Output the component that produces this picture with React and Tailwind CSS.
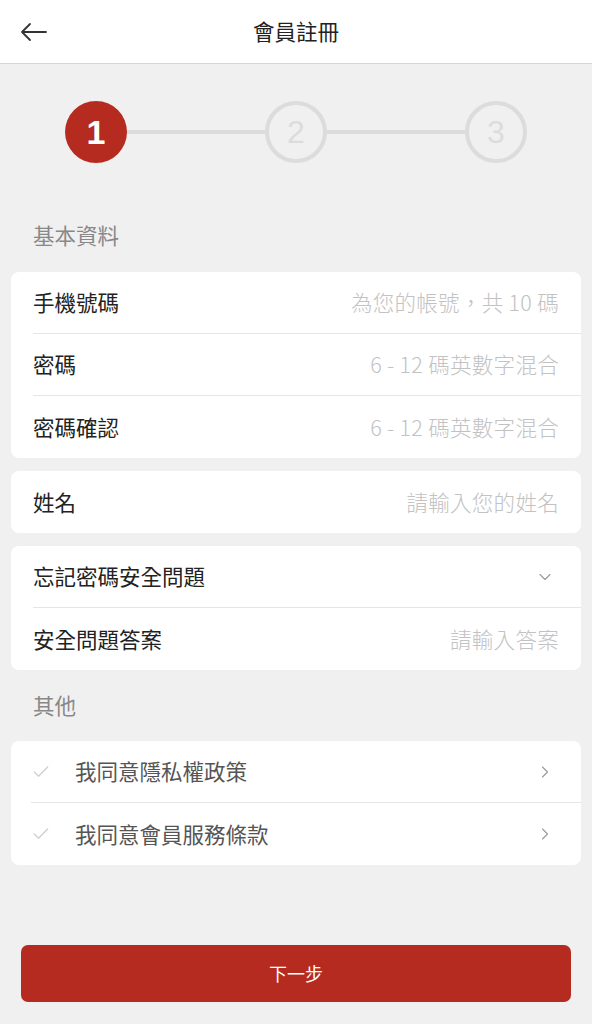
import { ChevronDown, ChevronRight, Check } from 'lucide-react';

const font = { fontFamily: '"Noto Sans CJK TC", "Noto Sans", sans-serif' };

function Row({ label, placeholder, last, children }) {
  return (
    <div className="flex h-[62px] items-stretch">
      <div className={`ml-[22px] flex flex-1 items-center justify-between pr-[22px] ${last ? '' : 'border-b border-[#e6e6e6]'}`}>
        <span className="text-[21.5px] text-[#222]">{label}</span>
        {placeholder && <span className="text-[21.5px] font-light tracking-[0.3px] text-[#c2c2c2]">{placeholder}</span>}
        {children}
      </div>
    </div>
  );
}

function Agree({ label, last }) {
  return (
    <div className="flex h-[62px] items-stretch">
      <div className={`ml-[20px] flex flex-1 items-center pr-[26px] ${last ? '' : 'border-b border-[#e6e6e6]'}`}>
        <Check size={20} strokeWidth={1.6} className="text-[#cfcfcf]" />
        <span className="ml-[24px] flex-1 text-[21.5px] text-[#555]">{label}</span>
        <ChevronRight size={20} strokeWidth={1.3} className="text-[#999]" />
      </div>
    </div>
  );
}

function Step({ n, active }) {
  if (active) {
    return (
      <div className="flex h-[62px] w-[62px] shrink-0 items-center justify-center rounded-full bg-[#b52b20] text-[34px] font-bold text-white" style={{ fontFamily: '"Liberation Sans", Arial, sans-serif' }}>
        {n}
      </div>
    );
  }
  return (
    <div className="flex h-[62px] w-[62px] shrink-0 items-center justify-center rounded-full border-[4px] border-[#dcdcdc] text-[32px] text-[#dcdcdc]" style={{ fontFamily: '"Liberation Sans", Arial, sans-serif' }}>
      {n}
    </div>
  );
}

export default function App() {
  return (
    <div className="flex min-h-[1024px] w-[592px] flex-col bg-[#f0f0f0]" style={font}>
      <header className="relative flex h-[64px] items-center justify-center border-b border-[#d6d6d6] bg-white">
        <svg className="absolute left-[20px] top-[21px]" width="27" height="22" viewBox="0 0 27 22" fill="none" stroke="#333" strokeWidth="1.8" strokeLinecap="round" strokeLinejoin="round">
          <path d="M26 11H2M10 3L2 11l8 8" />
        </svg>
        <h1 className="text-[21.5px] text-[#222]">會員註冊</h1>
      </header>

      <div className="mt-[37px] flex items-center px-[65px]">
        <Step n="1" active />
        <div className="h-[4px] flex-1 bg-[#dcdcdc]" />
        <Step n="2" />
        <div className="h-[4px] flex-1 bg-[#dcdcdc]" />
        <Step n="3" />
      </div>

      <p className="mt-[57px] px-[33px] text-[21.5px] leading-[30px] text-[#888]">基本資料</p>

      <div className="mx-[11px] mt-[22px] flex flex-col gap-[13px]">
        <div className="rounded-[8px] bg-white">
          <Row label="手機號碼" placeholder="為您的帳號，共 10 碼" />
          <Row label="密碼" placeholder="6 - 12 碼英數字混合" />
          <Row label="密碼確認" placeholder="6 - 12 碼英數字混合" last />
        </div>
        <div className="rounded-[8px] bg-white">
          <Row label="姓名" placeholder="請輸入您的姓名" last />
        </div>
        <div className="rounded-[8px] bg-white">
          <Row label="忘記密碼安全問題">
            <ChevronDown size={20} strokeWidth={1.3} className="mr-[4px] text-[#999]" />
          </Row>
          <Row label="安全問題答案" placeholder="請輸入答案" last />
        </div>
      </div>

      <p className="mt-[20px] px-[33px] text-[21.5px] leading-[30px] text-[#888]">其他</p>

      <div className="mx-[11px] mt-[21px] rounded-[8px] bg-white">
        <Agree label="我同意隱私權政策" />
        <Agree label="我同意會員服務條款" last />
      </div>

      <div className="mt-[80px] px-[21px]">
        <button className="flex h-[57px] w-full items-center justify-center rounded-[7px] bg-[#b52b20] text-[18px] text-white">
          下一步
        </button>
      </div>
    </div>
  );
}
